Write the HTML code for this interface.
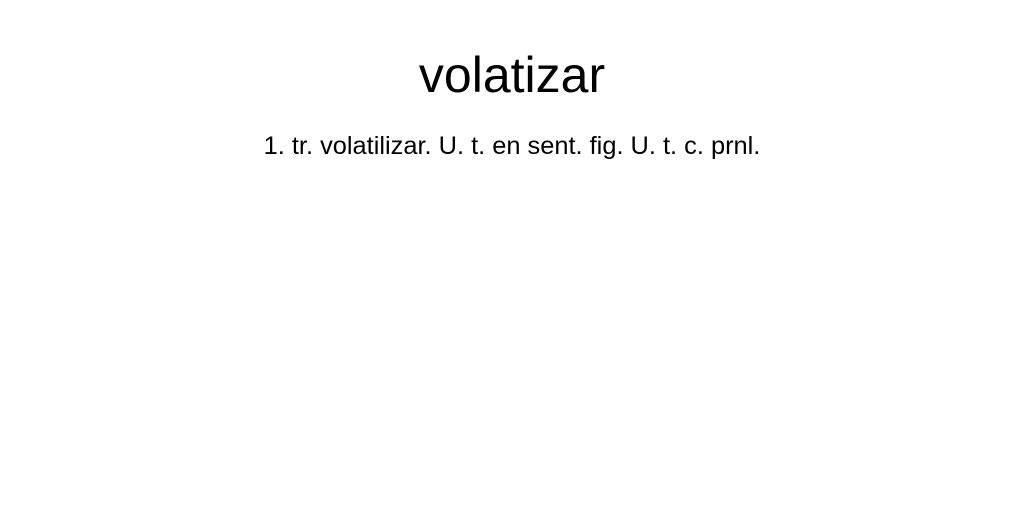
<!DOCTYPE html>
<html><head><style>
html,body{margin:0;padding:0;background:#fff;width:1024px;height:512px;overflow:hidden;font-family:"Liberation Sans",sans-serif;color:#000}
h1{position:absolute;top:47px;left:0;width:1024px;text-align:center;font-size:50px;font-weight:normal;margin:0;line-height:57px}
p{position:absolute;top:131px;left:0;width:1024px;text-align:center;font-size:25.4px;margin:0;line-height:30px}
</style></head><body>
<h1>volatizar</h1>
<p>1. tr. volatilizar. U. t. en sent. fig. U. t. c. prnl.</p>
</body></html>
